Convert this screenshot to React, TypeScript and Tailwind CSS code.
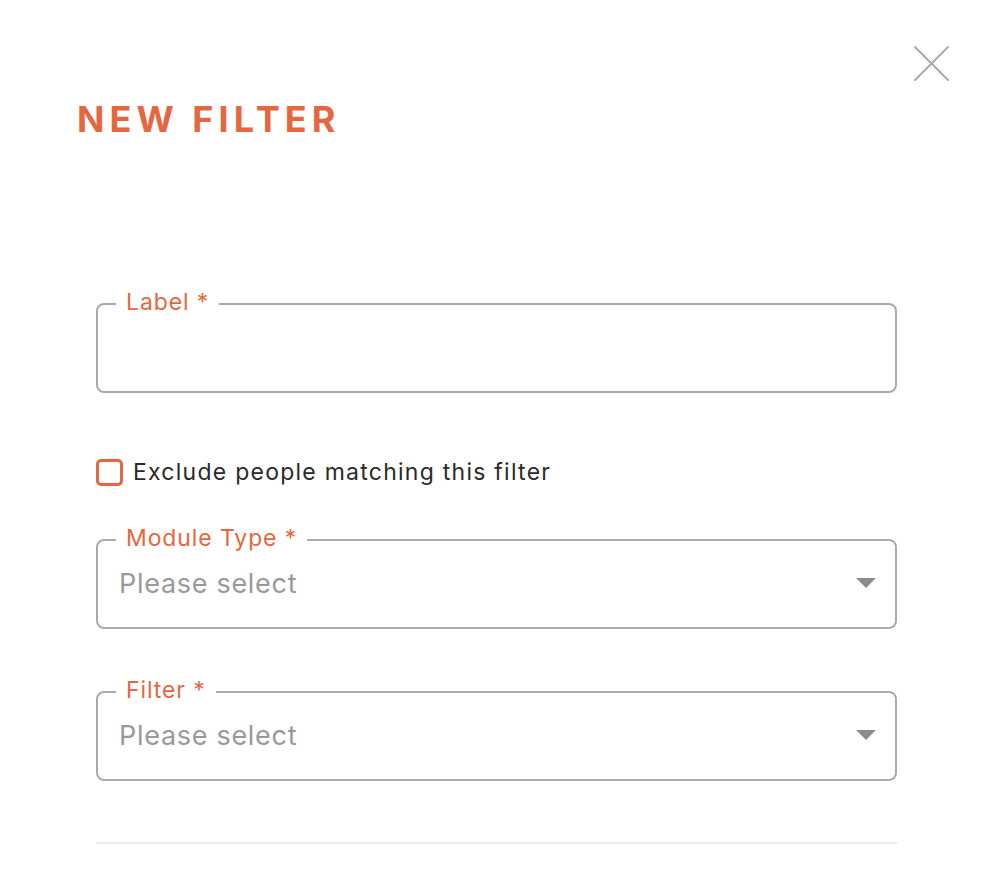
import React from "react";

const ORANGE = "text-[#e5673f]";

function Field({ label, select }: { label: string; select?: boolean }) {
  return (
    <div className="relative h-[90px] w-full rounded-[8px] border-2 border-[#a7aca9] bg-white">
      <span className={`absolute left-[18px] top-[-3px] -translate-y-1/2 bg-white px-[10px] text-[23px] leading-none tracking-[0.9px] ${ORANGE}`}>
        {label}
      </span>
      {select && (
        <div className="flex h-full items-center justify-between pb-[2px] pl-[21px] pr-[19px]">
          <span className="text-[27px] leading-none tracking-[0.7px] text-[#999999]">Please select</span>
          <svg width="20" height="10" viewBox="0 0 20 10">
            <path d="M0 0 H20 L10 10 Z" fill="#8c8c8c" />
          </svg>
        </div>
      )}
    </div>
  );
}

export default function App() {
  return (
    <div
      className="relative h-[888px] w-[994px] bg-white"
      style={{ fontFamily: "Inter, 'Noto Sans', sans-serif" }}
    >
      <button className="absolute left-[913px] top-[45px] h-[37px] w-[37px]" aria-label="Close">
        <svg width="37" height="37" viewBox="0 0 37 37">
          <path d="M2 2 L35 35 M35 2 L2 35" stroke="#a7aca9" strokeWidth="2" strokeLinecap="round" />
        </svg>
      </button>

      <div className="pl-[77px] pt-[101px]">
        <h1 className={`text-[36px] font-bold leading-none tracking-[0.14em] ${ORANGE}`}>NEW FILTER</h1>
      </div>

      <div className="flex flex-col pl-[96px] pr-[97px] pt-[166px]">
        <Field label="Label *" />

        <label className="mt-[66px] flex items-center gap-[10px]">
          <span className="h-[27px] w-[27px] rounded-[5px] border-[3px] border-[#e5673f] bg-white" />
          <span className="text-[23px] leading-none tracking-[1.25px] text-[#2a2a2a]">Exclude people matching this filter</span>
        </label>

        <div className="mt-[53px]">
          <Field label="Module Type *" select />
        </div>
        <div className="mt-[62px]">
          <Field label="Filter *" select />
        </div>

        <div className="mt-[61px] h-[2px] w-full bg-[#ebebeb]" />
      </div>
    </div>
  );
}
